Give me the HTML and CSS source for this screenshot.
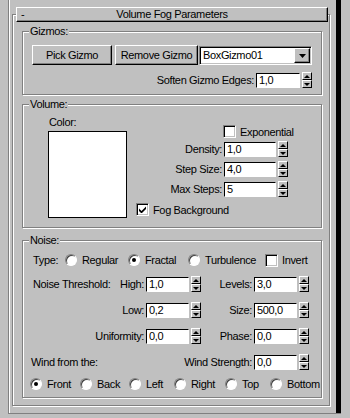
FILE: index.html
```html
<!DOCTYPE html>
<html>
<head>
  <title>Volume Fog Parameters</title>
  <link rel="stylesheet" href="styles.css">
</head>

<body>

<div class="cmd">
  <div class="cmd-body">
    <div class="rollout">
      <div class="rollout-title">
        <span class="minus">-</span>
        <span class="caption">Volume Fog Parameters</span>
      </div>

      <!-- gizmos -->
      <div class="group gizmos">
        <div class="legend"><span>Gizmos:</span></div>
        <div class="btn-row">
          <button class="btn pick">Pick Gizmo</button>
          <button class="btn remove">Remove Gizmo</button>
          <div class="combo">
            <span class="combo-text">BoxGizmo01</span>
            <span class="combo-btn"><svg width="7" height="4" viewBox="0 0 7 4"><path d="M0 0h7L3.5 4z"/></svg></span>
          </div>
        </div>
        <div class="soften-row">
          <label>Soften Gizmo Edges:</label>
          <input class="field" type="text" value="1,0">
          <span class="spin"><span class="up"></span><span class="dn"></span></span>
        </div>
      </div>

      <!-- volume -->
      <div class="group volume">
        <div class="legend"><span>Volume:</span></div>
        <div class="vol-body">
          <div class="color-col">
            <div class="color-label">Color:</div>
            <div class="swatch"></div>
          </div>
          <div class="vol-col">
            <div class="opt exp"><span class="check"></span>Exponential</div>
            <div class="vrow density">
              <label>Density:</label>
              <input class="field" type="text" value="1,0">
              <span class="spin"><span class="up"></span><span class="dn"></span></span>
            </div>
            <div class="vrow">
              <label>Step Size:</label>
              <input class="field" type="text" value="4,0">
              <span class="spin"><span class="up"></span><span class="dn"></span></span>
            </div>
            <div class="vrow">
              <label>Max Steps:</label>
              <input class="field" type="text" value="5">
              <span class="spin"><span class="up"></span><span class="dn"></span></span>
            </div>
            <div class="opt fogbg">
              <span class="check"><svg width="7" height="7" viewBox="0 0 7 7"><path d="M0 2.5l2.5 2.5L7 0.5V3L2.5 7.5 0 5z"/></svg></span>Fog Background
            </div>
          </div>
        </div>
      </div>

      <!-- noise -->
      <div class="group noise">
        <div class="legend"><span>Noise:</span></div>
        <div class="type-row">
          <span>Type:</span>
          <span class="opt"><span class="radio"></span>Regular</span>
          <span class="opt"><span class="radio on"></span>Fractal</span>
          <span class="opt"><span class="radio"></span>Turbulence</span>
          <span class="opt box"><span class="check"></span>Invert</span>
        </div>

        <div class="noise-grid">
          <div class="lbl split"><span>Noise Threshold:</span><span>High:</span></div>
          <div class="spinner"><input class="field" type="text" value="1,0"><span class="spin"><span class="up"></span><span class="dn"></span></span></div>
          <div class="lbl">Levels:</div>
          <div class="spinner"><input class="field" type="text" value="3,0"><span class="spin"><span class="up"></span><span class="dn"></span></span></div>

          <div class="lbl">Low:</div>
          <div class="spinner"><input class="field" type="text" value="0,2"><span class="spin"><span class="up"></span><span class="dn"></span></span></div>
          <div class="lbl">Size:</div>
          <div class="spinner"><input class="field" type="text" value="500,0"><span class="spin"><span class="up"></span><span class="dn"></span></span></div>

          <div class="lbl">Uniformity:</div>
          <div class="spinner"><input class="field" type="text" value="0,0"><span class="spin"><span class="up"></span><span class="dn"></span></span></div>
          <div class="lbl">Phase:</div>
          <div class="spinner"><input class="field" type="text" value="0,0"><span class="spin"><span class="up"></span><span class="dn"></span></span></div>

          <div class="lbl wind-from">Wind from the:</div>
          <div></div>
          <div class="lbl">Wind Strength:</div>
          <div class="spinner"><input class="field" type="text" value="0,0"><span class="spin"><span class="up"></span><span class="dn"></span></span></div>
        </div>

        <div class="wind-row">
          <span class="opt"><span class="radio on"></span>Front</span>
          <span class="opt"><span class="radio"></span>Back</span>
          <span class="opt"><span class="radio"></span>Left</span>
          <span class="opt"><span class="radio"></span>Right</span>
          <span class="opt"><span class="radio"></span>Top</span>
          <span class="opt"><span class="radio"></span>Bottom</span>
        </div>
      </div>

    </div>
  </div>
  <div class="scroll"></div>
</div>

</body>
</html>
```

FILE: styles.css
```css
*{
  box-sizing: border-box;
}

body{
  margin: 0;
  background-color: #c0c0c0;
  font: 11px "Liberation Sans", Arial, sans-serif;
  letter-spacing: -0.35px;
  color: #000;
  overflow: hidden;
}

/* command panel + thin scroll bar */
.cmd{
  display: flex;
  width: 333px;
  height: 414px;
  margin-left: 8px;
  border-left: 1px solid #808080;
  border-bottom: 1px solid #808080;
  box-shadow: inset 1px 0 #fff, 0 1px #fff;
}

.cmd-body{
  flex: 1;
  padding: 14px 0 0 3px;
}

.scroll{
  width: 5px;
  background-color: #000;
}

.rollout{
  width: 318px;
  border: 1px solid #808080;
  box-shadow: inset 1px 1px #fff, 1px 1px #fff;
  padding-bottom: 7px;
}

.rollout-title{
  display: grid;
  grid-template-columns: 20px 1fr 20px;
  align-items: center;
  height: 15px;
  margin: -8px 1px 0 3px;
  background-color: #c0c0c0;
  border: 1px solid;
  border-color: #fff #000 #000 #fff;
  box-shadow: inset -1px -1px #808080;
  line-height: 13px;
}

.minus{
  padding-left: 4px;
}

.caption{
  text-align: center;
}

/* group boxes */
.group{
  margin: 9px 7px 0 9px;
  border: 1px solid #808080;
  box-shadow: inset 1px 1px #fff, 1px 1px #fff;
}

.legend{
  margin-top: -7px;
  height: 13px;
  line-height: 13px;
  padding-left: 6px;
}

.legend span{
  background-color: #c0c0c0;
  padding: 0 1px;
}

.gizmos{
  padding-bottom: 6px;
}

.volume{
  padding-bottom: 9px;
}

.noise{
  margin-top: 12px;
  padding-bottom: 5px;
}

/* buttons */
.btn-row{
  display: flex;
  margin-top: 7px;
  padding-left: 9px;
}

.btn{
  height: 20px;
  padding: 0;
  font: inherit;
  letter-spacing: inherit;
  color: #000;
  background-color: #c0c0c0;
  border: 1px solid;
  border-color: #fff #000 #000 #fff;
  box-shadow: inset -1px -1px #808080;
}

.pick{
  width: 80px;
}

.remove{
  width: 83px;
  margin-left: 3px;
}

.combo{
  display: flex;
  width: 113px;
  height: 19px;
  margin: 1px 0 0 1px;
  background-color: #fff;
  border: 1px solid;
  border-color: #808080 #fff #fff #808080;
  box-shadow: inset 1px 1px #000, inset -1px -1px #c0c0c0;
  padding: 1px;
}

.combo-text{
  flex: 1;
  padding-left: 2px;
  line-height: 15px;
}

.combo-btn{
  display: flex;
  align-items: center;
  justify-content: center;
  width: 16px;
  background-color: #c0c0c0;
  border: 1px solid;
  border-color: #fff #000 #000 #fff;
  box-shadow: inset -1px -1px #808080;
}

/* fields and spinners */
.field{
  width: 52px;
  height: 15px;
  padding: 0 2px;
  font: inherit;
  letter-spacing: inherit;
  color: #000;
  background-color: #fff;
  border: 1px solid;
  border-color: #000 #fff #fff #000;
  outline: none;
}

.spin{
  display: flex;
  flex-direction: column;
  flex: none;
  width: 10px;
  height: 16px;
  margin-left: 2px;
}

.spin span{
  flex: 1;
  display: flex;
  align-items: center;
  justify-content: center;
  background-color: #c0c0c0;
  border: 1px solid;
  border-color: #fff #000 #000 #fff;
}

.spin span::after{
  content: "";
  border-left: 3px solid transparent;
  border-right: 3px solid transparent;
}

.spin .up::after{
  border-bottom: 3px solid #000;
}

.spin .dn::after{
  border-top: 3px solid #000;
}

.soften-row{
  display: flex;
  align-items: center;
  justify-content: flex-end;
  height: 16px;
  margin-top: 7px;
  padding-right: 9px;
}

.soften-row label{
  margin-right: 2px;
}

.soften-row .field{
  width: 44px;
}

/* check boxes and radios */
.opt{
  display: flex;
  align-items: center;
  gap: 5px;
  white-space: nowrap;
}

.check{
  display: flex;
  align-items: center;
  justify-content: center;
  flex: none;
  width: 13px;
  height: 13px;
  background-color: #fff;
  border: 1px solid;
  border-color: #808080 #fff #fff #808080;
  box-shadow: inset 1px 1px #000, inset -1px -1px #c0c0c0;
}

.radio{
  display: flex;
  align-items: center;
  justify-content: center;
  flex: none;
  width: 12px;
  height: 12px;
  border-radius: 50%;
  background-color: #fff;
  border: 1px solid;
  border-color: #808080 #fff #fff #808080;
  box-shadow: inset 1px 1px #404040;
}

.radio.on::after{
  content: "";
  width: 4px;
  height: 4px;
  border-radius: 50%;
  background-color: #000;
}

/* volume */
.vol-body{
  display: flex;
  margin-top: 5px;
}

.color-col{
  padding-left: 25px;
}

.color-label{
  height: 13px;
  line-height: 13px;
  padding-left: 1px;
}

.swatch{
  width: 79px;
  height: 87px;
  margin-top: 2px;
  background-color: #fff;
  border: 1px solid #000;
}

.vol-col{
  margin-left: 9px;
}

.exp{
  gap: 4px;
  height: 13px;
  margin: 9px 0 0 87px;
}

.vrow{
  display: flex;
  align-items: center;
  height: 16px;
  margin-top: 4px;
}

.vrow.density{
  margin-top: 3px;
}

.vrow label{
  width: 86px;
  margin-right: 2px;
  text-align: right;
}

.fogbg{
  gap: 4px;
  height: 13px;
  margin-top: 6px;
}

/* noise */
.type-row{
  display: grid;
  grid-template-columns: 32px 63px 60px 77px auto;
  align-items: center;
  height: 16px;
  margin-top: 5px;
  padding-left: 10px;
}

.type-row .box{
  gap: 4px;
}

.noise-grid{
  display: grid;
  grid-template-columns: 111px 55px 49px 55px;
  grid-auto-rows: 16px;
  column-gap: 2px;
  row-gap: 10px;
  margin-top: 8px;
  padding-left: 10px;
}

.lbl{
  display: flex;
  align-items: center;
  justify-content: flex-end;
  white-space: nowrap;
}

.lbl.split{
  justify-content: space-between;
}

.lbl.wind-from{
  justify-content: flex-start;
  margin-left: -2px;
}

.spinner{
  display: flex;
  align-items: center;
}

.noise .field{
  width: 43px;
}

.wind-row{
  display: grid;
  grid-template-columns: 50px 49px 45px 51px 45px auto;
  align-items: center;
  height: 16px;
  margin-top: 6px;
  padding-left: 7px;
}
```
